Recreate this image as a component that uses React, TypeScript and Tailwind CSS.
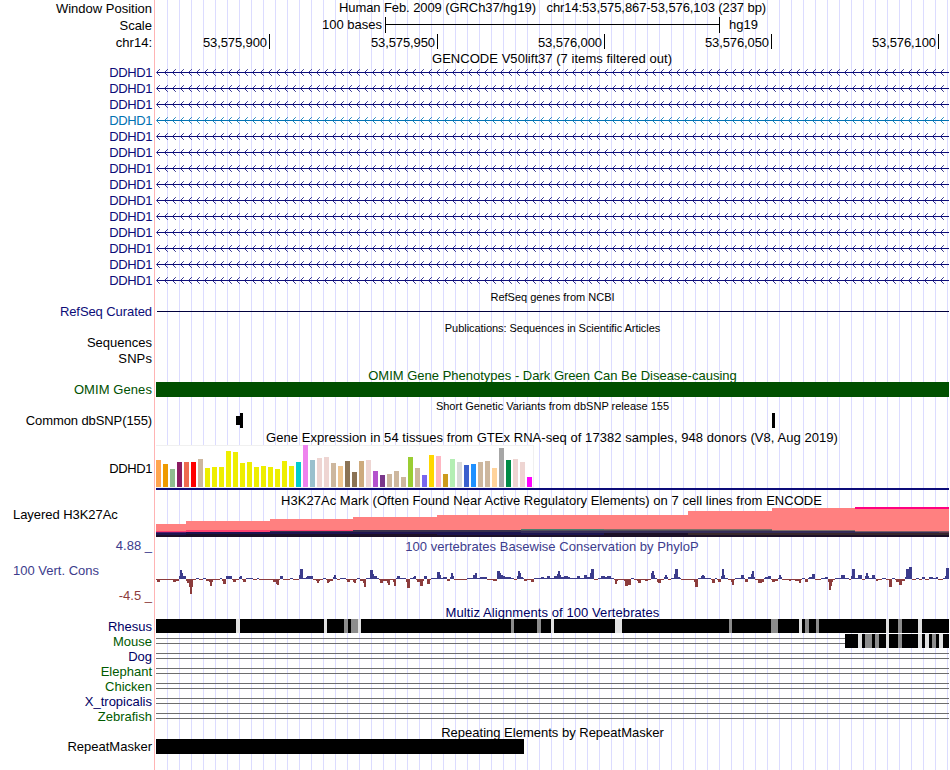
import React from 'react';

interface RowProps {
    height: string;
    label?: React.ReactNode;
    labelClass?: string;
    children?: React.ReactNode;
}

interface TitleProps {
    className?: string;
    children: React.ReactNode;
}

// [width, color]
type Segment = [number, string];

// [start x, height]: positive scores go up, negative ones go down
type Run = [number, number];

const TRACK_START = 156;
const TRACK_END = 949;

const BLACK = '#000000';
const GREY = '#8c8c8c';
const LIGHT = '#e1e1e1';

const geneColors = Array.from({ length: 14 }, (_, i) => (i === 3 ? '#0072b2' : '#0c0c78'));

const tissues: [string, number][] = [
    ['#ffa54f', 27], ['#ee9a00', 23], ['#8fbc8f', 18], ['#8b1c62', 25], ['#ee6a50', 25], ['#ff0000', 25],
    ['#cdb79e', 28], ['#eeee00', 19], ['#eeee00', 20], ['#eeee00', 20], ['#eeee00', 36], ['#eeee00', 35],
    ['#eeee00', 24], ['#eeee00', 25], ['#eeee00', 20], ['#eeee00', 21], ['#eeee00', 20], ['#eeee00', 18],
    ['#eeee00', 26], ['#eeee00', 21], ['#00cdcd', 25], ['#ee82ee', 42], ['#9ac0cd', 27], ['#eed5d2', 29],
    ['#eed5d2', 30], ['#cdb79e', 24], ['#eec591', 21], ['#8b7355', 26], ['#8b7355', 15], ['#cdaa7d', 26],
    ['#eed5d2', 27], ['#b452cd', 16], ['#7a378b', 12], ['#cdb79e', 13], ['#cdb79e', 16], ['#cdb79e', 10],
    ['#9acd32', 30], ['#cdb79e', 19], ['#7a67ee', 12], ['#ffd700', 32], ['#ffb6c1', 31], ['#cd9b1d', 13],
    ['#b4eeb4', 28], ['#d9d9d9', 25], ['#3a5fcd', 22], ['#1e90ff', 23], ['#cdb79e', 25], ['#cdb79e', 26],
    ['#ffd39b', 19], ['#a6a6a6', 39], ['#008b45', 27], ['#eed5d2', 28], ['#eed5d2', 25], ['#ff00ff', 10],
];

// every column is a stack from the top of the signal down to the base line
const h3k27ac: { width: number; layers: Segment[] }[] = [
    { width: 30, layers: [[7, '#ff8080'], [1, '#ff4070'], [1, '#5a1c6e'], [2, '#1e1450'], [2, '#1c1028']] },
    { width: 84, layers: [[9, '#ff8080'], [2, '#ff4070'], [2, '#1e1450'], [3, '#1c1028']] },
    { width: 83, layers: [[11, '#ff8080'], [1, '#ff4070'], [1, '#38304c'], [2, '#1e1450'], [3, '#1c1028']] },
    { width: 84, layers: [[13, '#ff8080'], [2, '#38304c'], [2, '#1e1450'], [3, '#1c1028']] },
    { width: 84, layers: [[15, '#ff8080'], [2, '#38304c'], [3, '#1c1450'], [2, '#1c1028']] },
    { width: 83, layers: [[14, '#ff8080'], [1, '#4c8070'], [1, '#504c58'], [2, '#342c58'], [2, '#1c1450'], [2, '#1c1028']] },
    { width: 84, layers: [[14, '#ff8080'], [1, '#807068'], [1, '#504c58'], [2, '#342c58'], [4, '#1c1028']] },
    { width: 84, layers: [[18, '#ff8080'], [1, '#807068'], [1, '#504c58'], [2, '#342c58'], [2, '#38282c'], [2, '#1c1028']] },
    { width: 83, layers: [[22, '#ff8080'], [1, '#807068'], [2, '#342c58'], [2, '#38282c'], [2, '#1c1028']] },
    { width: 84, layers: [[2, '#ff0080'], [22, '#ff8080'], [1, '#805c60'], [1, '#342c58'], [2, '#38282c'], [2, '#1c1028']] },
    { width: 10, layers: [[2, '#ff0080'], [22, '#ff8080'], [1, '#805c60'], [1, '#5c3450'], [2, '#38282c'], [2, '#1c1028']] },
];

const phyloP: Run[] = [
    [156, -1], [157, -3], [160, -1], [173, -3], [176, -2], [179, 3], [180, 9], [182, 6], [183, 3], [186, -2],
    [187, -4], [189, -8], [190, -15], [192, -8], [193, -1], [196, 1], [199, -1], [203, 1], [206, -2], [209, -3],
    [210, -7], [212, -3], [213, -1], [220, 1], [222, -2], [223, -5], [226, 3], [232, -1], [233, -3], [236, -1],
    [239, 2], [240, 3], [242, -1], [243, -3], [246, 1], [253, -1], [257, 1], [259, -1], [273, -3], [276, -5],
    [277, -6], [279, -1], [280, 3], [283, -1], [290, 1], [293, -1], [299, 4], [300, 10], [303, 1], [306, 2],
    [307, 3], [313, -1], [316, -2], [317, -4], [319, -2], [320, -1], [323, 1], [326, -1], [327, -4], [329, -3],
    [330, -2], [333, 2], [334, 4], [336, 1], [337, -1], [340, 1], [346, -1], [347, -3], [350, -1], [353, -3],
    [354, -4], [356, -1], [357, 1], [360, -2], [363, -4], [364, -8], [366, 1], [370, 9], [373, 5], [374, 3],
    [376, 3], [377, 1], [379, -1], [380, -4], [383, -2], [387, -4], [388, -6], [390, -1], [393, -3], [394, -7],
    [396, 1], [397, 3], [400, 1], [406, -3], [407, -9], [410, 1], [413, 2], [414, 3], [416, -1], [417, -3],
    [420, -7], [423, -2], [424, 3], [427, -5], [430, -1], [431, 1], [437, 7], [440, 4], [441, 1], [443, 2],
    [447, -2], [450, 2], [451, 6], [453, 3], [454, -1], [467, 1], [473, 4], [475, 6], [477, 1], [480, 2],
    [487, -1], [493, -2], [497, 8], [500, 6], [501, 4], [503, 3], [505, 2], [511, 1], [514, -1], [517, 3],
    [518, 8], [520, 6], [521, 2], [523, 1], [524, -2], [527, -1], [531, -3], [534, 1], [541, 2], [544, 1],
    [547, 3], [550, 1], [554, 3], [557, 5], [558, 8], [560, 4], [561, 2], [564, 3], [568, 2], [570, 1],
    [577, 3], [580, 1], [584, 4], [587, 2], [590, 6], [591, 10], [594, -1], [598, 1], [601, 3], [605, 2],
    [607, 3], [611, 1], [614, -1], [615, -5], [617, -2], [618, -1], [624, -2], [625, -7], [628, -6], [631, 1],
    [634, -1], [637, -2], [638, -4], [641, -1], [645, -2], [648, -1], [651, 6], [652, 8], [654, 4], [655, 1],
    [657, -3], [658, -4], [661, -1], [664, 2], [665, 4], [667, 2], [668, -1], [671, 1], [674, 5], [675, 10],
    [678, 2], [680, 1], [681, -1], [694, -3], [695, -8], [698, 1], [701, 3], [702, 4], [704, 3], [705, 1],
    [711, -1], [712, -4], [715, 1], [717, -1], [718, -3], [721, 3], [722, 10], [724, 4], [725, 1], [728, -1],
    [731, -3], [732, -6], [734, -1], [735, 1], [741, 4], [744, 1], [745, -3], [748, 2], [751, 5], [752, 8],
    [754, 2], [755, -1], [758, -4], [762, -3], [764, 1], [765, 2], [768, 3], [771, -1], [772, -3], [775, -2],
    [778, 1], [779, 4], [781, 2], [782, -1], [789, -2], [791, -1], [795, -2], [799, -4], [801, -1], [802, 1],
    [805, -3], [808, 1], [809, 2], [812, 5], [815, -1], [821, 1], [825, 2], [828, -3], [829, -11], [831, -7],
    [832, -3], [833, -1], [835, 1], [841, 4], [845, 1], [849, -1], [851, 3], [852, 10], [855, 1], [858, 4],
    [862, -1], [865, 3], [866, 6], [868, 3], [869, 1], [872, 4], [875, 1], [876, -2], [878, -1], [882, 1],
    [886, -1], [889, -8], [892, 1], [895, -1], [896, -3], [899, -6], [902, -2], [905, 2], [906, 10], [909, 12],
    [912, -1], [916, 1], [919, -1], [922, 2], [925, -1], [929, 2], [933, 1], [936, 2], [938, -1], [943, 1],
    [945, 3], [946, 11],
];

const rhesus: Segment[] = [
    [80, BLACK], [4, LIGHT], [84, BLACK], [3, LIGHT], [17, BLACK], [4, GREY], [3, BLACK], [7, GREY], [3, LIGHT],
    [150, BLACK], [3, GREY], [23, BLACK], [4, GREY], [10, BLACK], [3, LIGHT], [61, BLACK], [7, LIGHT],
    [107, BLACK], [3, GREY], [39, BLACK], [7, GREY], [21, BLACK], [3, LIGHT], [3, BLACK], [4, GREY], [7, BLACK],
    [3, GREY], [67, BLACK], [3, LIGHT], [9, BLACK], [4, GREY], [16, BLACK], [4, LIGHT], [27, BLACK],
];

const mouse: Segment[] = [
    [13, BLACK], [4, LIGHT], [3, BLACK], [7, GREY], [3, BLACK], [4, GREY], [7, BLACK], [3, LIGHT], [9, BLACK],
    [4, GREY], [16, BLACK], [4, LIGHT], [3, BLACK], [4, LIGHT], [3, BLACK], [4, GREY], [3, BLACK], [4, LIGHT],
    [6, BLACK],
];

const positions = [
    { label: '53,575,900', width: 114 },
    { label: '53,575,950', width: 168 },
    { label: '53,576,000', width: 167 },
    { label: '53,576,050', width: 167 },
    { label: '53,576,100', width: 167 },
];

const Row: React.FC<RowProps> = ({ height, label, labelClass = 'pt-px', children }) => (
    <div className={`flex ${height}`}>
        <div className={`w-[155px] mr-px shrink-0 border-r border-[#ffb4b4] pr-[2px] text-right whitespace-pre ${labelClass}`}>
            {label}
        </div>
        <div className="w-[793px] shrink-0 bg-[repeating-linear-gradient(to_right,transparent_0_11px,#dcdcff_11px_12px)]">
            {children}
        </div>
    </div>
);

const Title: React.FC<TitleProps> = ({ className = '', children }) => (
    <p className={`text-center whitespace-pre ${className}`}>{children}</p>
);

const Segments = ({ items }: { items: Segment[] }) => (
    <div className="flex h-[14px]">
        {items.map(([width, color], i) => (
            <div key={i} style={{ width, backgroundColor: color }} />
        ))}
    </div>
);

const Intron = ({ color }: { color: string }) => {
    let arrows = '';
    for (let x = 0; x < 792; x += 8) {
        arrows += `M${x + 3.8} 5.2L${x + 0.5} 8.5L${x + 3.8} 11.8`;
    }

    return (
        <svg width="793" height="16" className="block" fill="none" stroke={color}>
            <path d="M0.5 8.5H793" shapeRendering="crispEdges" />
            <path d={arrows} strokeWidth="0.85" />
        </svg>
    );
};

const DoubleLine = ({ className = 'w-full' }: { className?: string }) => (
    <div className={`pt-[4px] ${className}`}>
        <div className="h-[6px] border-y border-[#6e6e6e]" />
    </div>
);

const Conservation = () => (
    <svg width="793" height="50" className="block" shapeRendering="crispEdges">
        {phyloP.map(([x, score], i) => {
            const end = i + 1 < phyloP.length ? phyloP[i + 1][0] : TRACK_END;
            return (
                <rect
                    key={x}
                    x={x - TRACK_START}
                    y={score > 0 ? 26 - score : 26}
                    width={end - x}
                    height={Math.abs(score)}
                    fill={score > 0 ? '#3c3c8c' : '#8c3c3c'}
                />
            );
        })}
    </svg>
);

export default function App() {
    return (
        <div className="w-[950px] h-[770px] overflow-hidden bg-white text-black font-['Liberation_Sans',Arial,sans-serif] text-[13px] leading-[15px]">
            <Row height="h-[17px]" label="Window Position">
                <Title className="tracking-[-0.085px]">
                    {'Human Feb. 2009 (GRCh37/hg19)   chr14:53,575,867-53,576,103 (237 bp)'}
                </Title>
            </Row>
            <Row height="h-[17px]" label="Scale">
                <div className="flex">
                    <span className="w-[226px] mr-[3px] text-right">100 bases</span>
                    <div className="w-[335px] h-[16px] border-x border-black">
                        <div className="h-[8px] border-b border-black" />
                    </div>
                    <span className="ml-[9px]">hg19</span>
                </div>
            </Row>
            <Row height="h-[16px]" label="chr14:">
                <div className="flex">
                    {positions.map(({ label, width }) => (
                        <div
                            key={label}
                            className="h-[15px] pt-px pr-[2px] border-r border-black text-right tracking-[-0.1px]"
                            style={{ width }}
                        >
                            {label}
                        </div>
                    ))}
                </div>
            </Row>
            <Row height="h-[14px]">
                <Title className="pt-px pr-px tracking-[0.04px]">GENCODE V50lift37 (7 items filtered out)</Title>
            </Row>

            {geneColors.map((color, i) => (
                <Row key={i} height="h-[16px]" label={<span className="tracking-[-0.4px]" style={{ color }}>DDHD1</span>}>
                    <Intron color={color} />
                </Row>
            ))}

            <Row height="h-[15px]">
                <Title className="pt-[2px] text-[11px]">RefSeq genes from NCBI</Title>
            </Row>
            <Row height="h-[16px]" label="RefSeq Curated" labelClass="pt-px tracking-[-0.08px] text-[#0c0c78]">
                <div className="ml-px h-[9px] border-b border-[#00003c]" />
            </Row>
            <Row height="h-[15px]">
                <Title className="pt-[2px] text-[11px] tracking-[-0.05px]">Publications: Sequences in Scientific Articles</Title>
            </Row>
            <Row height="h-[16px]" label="Sequences" />
            <Row height="h-[16px]" label="SNPs" labelClass="pt-px tracking-[0.1px]" />

            <Row height="h-[16px]">
                <Title className="pt-[2px] text-[#005000]">OMIM Gene Phenotypes - Dark Green Can Be Disease-causing</Title>
            </Row>
            <Row height="h-[16px]" label="OMIM Genes" labelClass="tracking-[0.08px] text-[#005000]">
                <div className="h-[15px] bg-[#005000]" />
            </Row>

            <Row height="h-[15px]">
                <Title className="pt-px text-[11px]">Short Genetic Variants from dbSNP release 155</Title>
            </Row>
            <Row height="h-[16px]" label="Common dbSNP(155)" labelClass="tracking-[-0.1px]">
                <div className="flex items-start">
                    <div className="ml-[80px] mt-[3px] w-[4px] h-[9px] bg-black" />
                    <div className="w-[3px] h-[15px] bg-black" />
                    <div className="ml-[529px] w-[3px] h-[15px] bg-black" />
                </div>
            </Row>

            <Row height="h-[16px]">
                <Title className="pt-px pr-px tracking-[0.05px]">
                    Gene Expression in 54 tissues from GTEx RNA-seq of 17382 samples, 948 donors (V8, Aug 2019)
                </Title>
            </Row>
            <Row height="h-[45px]" label="DDHD1" labelClass="pt-[16px] tracking-[-0.4px]">
                <div className="w-[378px] h-[43px] flex items-end gap-[2px] bg-white border-t border-r border-b border-[#f0f0f0]">
                    {tissues.map(([color, height], i) => (
                        <div key={i} className="w-[5px] shrink-0" style={{ height, backgroundColor: color }} />
                    ))}
                </div>
                <div className="h-[2px] bg-[#0c0c78]" />
            </Row>

            <Row height="h-[17px]">
                <Title className="pt-[3px] pr-[2px] tracking-[0.04px]">
                    H3K27Ac Mark (Often Found Near Active Regulatory Elements) on 7 cell lines from ENCODE
                </Title>
            </Row>
            <Row height="h-[30px]" label="Layered H3K27Ac" labelClass="pl-[13px] !text-left tracking-[-0.05px]">
                <div className="flex items-end h-full">
                    {h3k27ac.map(({ width, layers }, i) => (
                        <div key={i} style={{ width }}>
                            {layers.map(([height, color], j) => (
                                <div key={j} style={{ height, backgroundColor: color }} />
                            ))}
                        </div>
                    ))}
                </div>
            </Row>

            <Row
                height="h-[66px]"
                labelClass="pt-px"
                label={
                    <div className="flex flex-col gap-[10px]">
                        <p className="text-[#3c3c8c]">4.88 _</p>
                        <p className="pl-[13px] text-left text-[#3c3c8c]">100 Vert. Cons</p>
                        <p className="text-[#8c3c3c]">-4.5 _</p>
                    </div>
                }
            >
                <Title className="h-[16px] pt-[2px] pr-px tracking-[0.03px] text-[#3c3c8c]">
                    100 vertebrates Basewise Conservation by PhyloP
                </Title>
                <Conservation />
            </Row>

            <Row height="h-[16px]">
                <Title className="pt-[2px] tracking-[0.08px] text-[#000064]">Multiz Alignments of 100 Vertebrates</Title>
            </Row>
            <Row height="h-[15px]" label="Rhesus" labelClass="text-[#000064]">
                <Segments items={rhesus} />
            </Row>
            <Row height="h-[15px]" label="Mouse" labelClass="text-[#005a00]">
                <div className="flex">
                    <DoubleLine className="w-[689px]" />
                    <Segments items={mouse} />
                </div>
            </Row>
            <Row height="h-[15px]" label="Dog" labelClass="text-[#000064]"><DoubleLine /></Row>
            <Row height="h-[15px]" label="Elephant" labelClass="text-[#005a00]"><DoubleLine /></Row>
            <Row height="h-[15px]" label="Chicken" labelClass="text-[#005a00]"><DoubleLine /></Row>
            <Row height="h-[15px]" label="X_tropicalis" labelClass="text-[#000064]"><DoubleLine /></Row>
            <Row height="h-[15px]" label="Zebrafish" labelClass="text-[#005a00]"><DoubleLine /></Row>

            <Row height="h-[15px]">
                <Title className="pt-px">Repeating Elements by RepeatMasker</Title>
            </Row>
            <Row height="h-[31px]" label="RepeatMasker" labelClass="">
                <div className="w-[368px] h-[15px] bg-black" />
            </Row>
        </div>
    );
}
